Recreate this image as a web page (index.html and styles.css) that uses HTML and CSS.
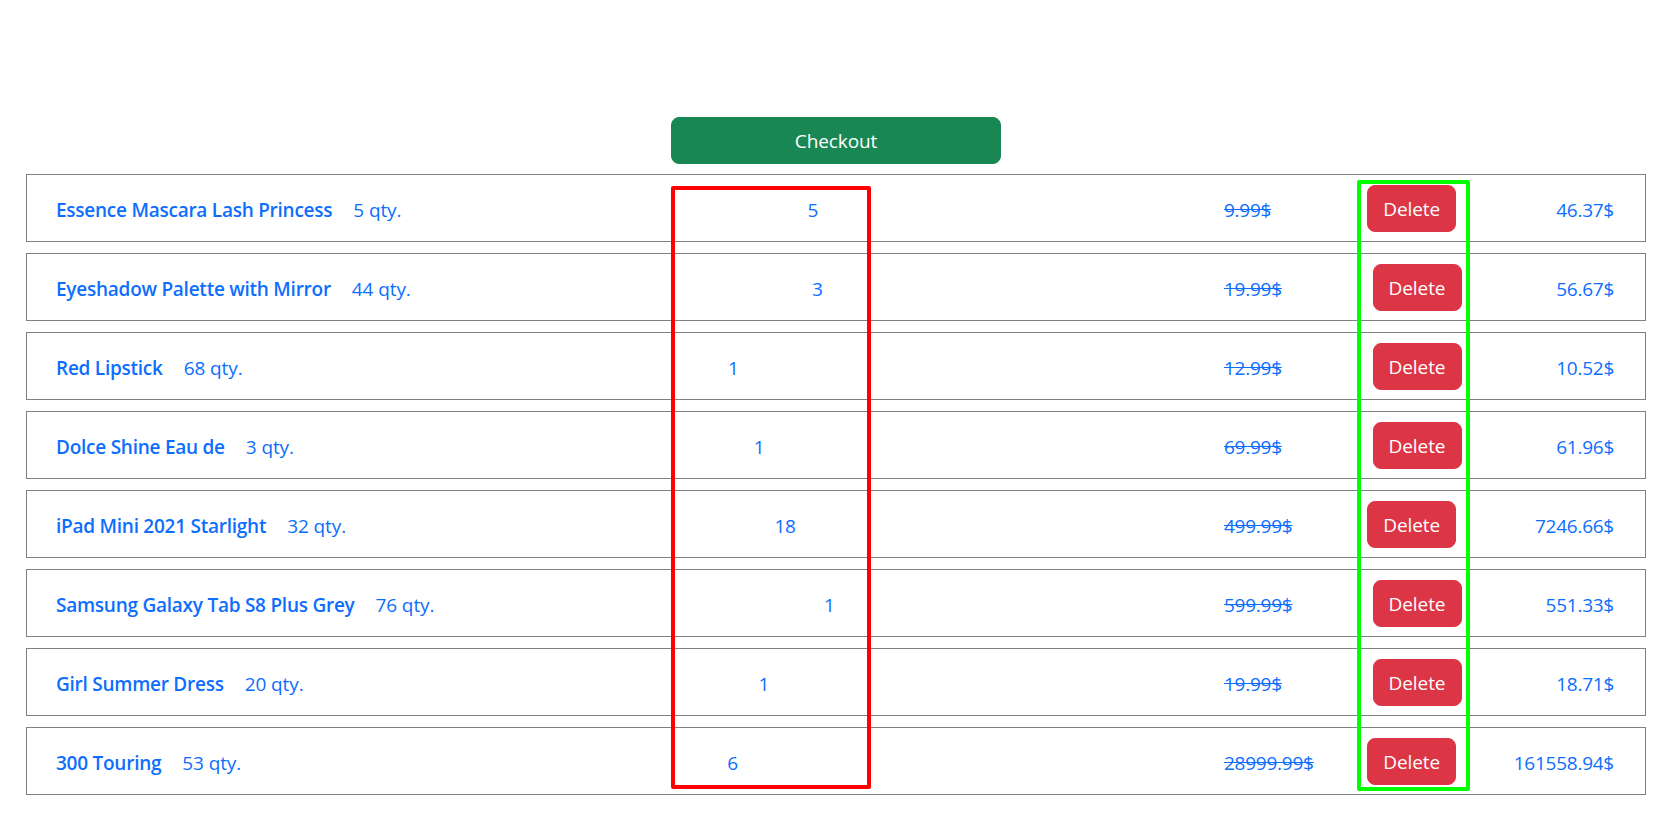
FILE: index.html
```html
<!DOCTYPE html>
<html lang="en">
<head>
<meta charset="utf-8">
<title>Cart</title>
<link rel="stylesheet" href="styles.css">
</head>
<body>
<main class="cart">
  <div class="checkout-bar">
    <button class="btn btn-checkout" type="button">Checkout</button>
  </div>
  <ul class="cart-list">
    <li class="cart-item">
      <div class="item-info"><a class="item-name" href="#">Essence Mascara Lash Princess</a><span class="item-stock">5 qty.</span></div>
      <div class="item-count">5</div>
      <div class="item-actions"><span class="item-price">9.99$</span><button class="btn btn-delete" type="button">Delete</button><span class="item-total">46.37$</span></div>
    </li>
    <li class="cart-item">
      <div class="item-info"><a class="item-name" href="#">Eyeshadow Palette with Mirror</a><span class="item-stock">44 qty.</span></div>
      <div class="item-count">3</div>
      <div class="item-actions"><span class="item-price">19.99$</span><button class="btn btn-delete" type="button">Delete</button><span class="item-total">56.67$</span></div>
    </li>
    <li class="cart-item">
      <div class="item-info"><a class="item-name" href="#">Red Lipstick</a><span class="item-stock">68 qty.</span></div>
      <div class="item-count">1</div>
      <div class="item-actions"><span class="item-price">12.99$</span><button class="btn btn-delete" type="button">Delete</button><span class="item-total">10.52$</span></div>
    </li>
    <li class="cart-item">
      <div class="item-info"><a class="item-name" href="#">Dolce Shine Eau de</a><span class="item-stock">3 qty.</span></div>
      <div class="item-count">1</div>
      <div class="item-actions"><span class="item-price">69.99$</span><button class="btn btn-delete" type="button">Delete</button><span class="item-total">61.96$</span></div>
    </li>
    <li class="cart-item">
      <div class="item-info"><a class="item-name" href="#">iPad Mini 2021 Starlight</a><span class="item-stock">32 qty.</span></div>
      <div class="item-count">18</div>
      <div class="item-actions"><span class="item-price">499.99$</span><button class="btn btn-delete" type="button">Delete</button><span class="item-total">7246.66$</span></div>
    </li>
    <li class="cart-item">
      <div class="item-info"><a class="item-name" href="#">Samsung Galaxy Tab S8 Plus Grey</a><span class="item-stock">76 qty.</span></div>
      <div class="item-count">1</div>
      <div class="item-actions"><span class="item-price">599.99$</span><button class="btn btn-delete" type="button">Delete</button><span class="item-total">551.33$</span></div>
    </li>
    <li class="cart-item">
      <div class="item-info"><a class="item-name" href="#">Girl Summer Dress</a><span class="item-stock">20 qty.</span></div>
      <div class="item-count">1</div>
      <div class="item-actions"><span class="item-price">19.99$</span><button class="btn btn-delete" type="button">Delete</button><span class="item-total">18.71$</span></div>
    </li>
    <li class="cart-item">
      <div class="item-info"><a class="item-name" href="#">300 Touring</a><span class="item-stock">53 qty.</span></div>
      <div class="item-count">6</div>
      <div class="item-actions"><span class="item-price">28999.99$</span><button class="btn btn-delete" type="button">Delete</button><span class="item-total">161558.94$</span></div>
    </li>
  </ul>
  <div class="highlight highlight-count"></div>
  <div class="highlight highlight-delete"></div>
</main>
</body>
</html>
```

FILE: styles.css
```css
* {
  box-sizing: border-box;
}

html, body {
  margin: 0;
  padding: 0;
  background: #ffffff;
}

body {
  font-family: "Open Sans", "Noto Sans", sans-serif;
  font-size: 19px;
  letter-spacing: -0.25px;
  line-height: 1.5;
  color: #0d6efd;
}

.cart {
  padding: 117px 18px 0 26px;
}

.checkout-bar {
  display: flex;
  justify-content: center;
  margin-bottom: 10px;
}

.btn {
  font-family: inherit;
  font-size: 19px;
  letter-spacing: -0.1px;
  line-height: 29px;
  font-weight: 400;
  color: #ffffff;
  border: 1px solid transparent;
  border-radius: 8px;
  padding: 9px 16px 7px;
  cursor: pointer;
}

.btn-checkout {
  width: 330px;
  background: #198754;
  border-color: #198754;
}

.cart-list {
  list-style: none;
  margin: 0;
  padding: 0;
  display: flex;
  flex-direction: column;
  gap: 11px;
}

.cart-item {
  display: flex;
  align-items: center;
  height: 68px;
  border: 1px solid #808080;
  padding: 1px 31px 0 29px;
}

.item-info {
  display: flex;
  align-items: center;
  gap: 21px;
  padding-top: 3px;
}

.item-name {
  color: #0d6efd;
  font-weight: 600;
  text-decoration: none;
}

.item-stock {
  color: #0d6efd;
  letter-spacing: -0.1px;
}

.item-count {
  flex: 1;
  text-align: center;
  padding-top: 3px;
}

.item-actions {
  width: 390px;
  display: flex;
  align-items: center;
  justify-content: space-between;
}

.item-price {
  text-decoration: line-through;
  padding-top: 3px;
}

.btn-delete {
  width: 89px;
  padding-left: 0;
  padding-right: 0;
  margin-right: 4px;
  background: #dc3545;
  border-color: #dc3545;
}

.item-total {
  text-align: right;
  padding-top: 3px;
}

.highlight {
  position: absolute;
  border-radius: 2px;
  pointer-events: none;
}

.highlight-count {
  left: 671px;
  top: 186px;
  width: 200px;
  height: 603px;
  border: 4px solid #ff0000;
}

.highlight-delete {
  left: 1357px;
  top: 180px;
  width: 113px;
  height: 611px;
  border: 4px solid #00ff00;
}
```
